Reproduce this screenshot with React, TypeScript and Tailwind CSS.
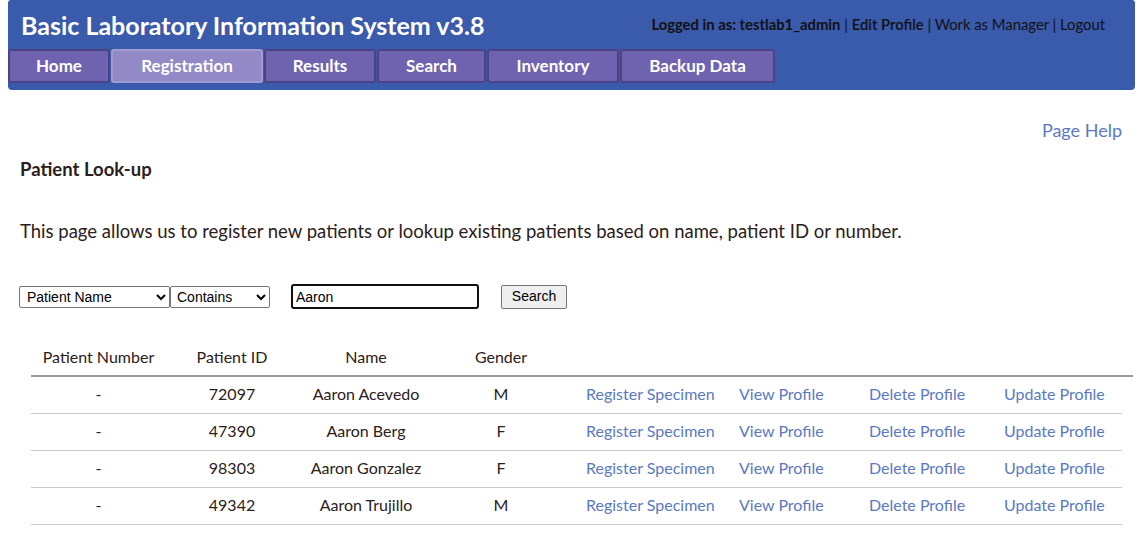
import React from "react";

const tabs = [
  { label: "Home", w: "w-[102px]" },
  { label: "Registration", w: "w-[152px]", active: true },
  { label: "Results", w: "w-[112px]" },
  { label: "Search", w: "w-[109px]" },
  { label: "Inventory", w: "w-[132px]" },
  { label: "Backup Data", w: "w-[155px]" },
];

const rows = [
  { id: "72097", name: "Aaron Acevedo", g: "M" },
  { id: "47390", name: "Aaron Berg", g: "F" },
  { id: "98303", name: "Aaron Gonzalez", g: "F" },
  { id: "49342", name: "Aaron Trujillo", g: "M" },
];

export default function App() {
  return (
    <div className="min-h-[535px] bg-white text-[#2b2020]" style={{ fontFamily: "Lato, 'Open Sans', sans-serif" }}>
      <div className="mx-[8px] h-[90px] rounded-b-[4px] rounded-t-[3px] bg-[#3a5aab] flex flex-col">
        <div className="flex items-start justify-between h-[48px]">
          <div className="pl-[13px] pt-[8px] text-[25px] font-bold text-white leading-[34px]">
            Basic Laboratory Information System v3.8
          </div>
          <div className="pr-[30px] pt-[15px] text-[14.8px] leading-[18px] text-[#111]">
            <span className="font-bold">Logged in as: testlab1_admin</span>
            <span> | </span>
            <span className="font-semibold">Edit Profile</span>
            <span> | </span>
            <span>Work as Manager</span>
            <span> | </span>
            <span>Logout</span>
          </div>
        </div>
        <div className="flex mt-[1px]">
          {tabs.map((t) => (
            <div
              key={t.label}
              className={`${t.w} h-[34px] mr-[1px] flex items-center justify-center rounded-[3px] border-2 text-[17px] font-bold text-white pb-[1px] ${
                t.active ? "bg-[#9389c6] border-[#a29cd2]" : "bg-[#6f63b0] border-[#4b4385]"
              }`}
            >
              {t.label}
            </div>
          ))}
        </div>
      </div>

      <div className="flex justify-end pr-[21px] pt-[28px] text-[18px] text-[#5b79c0] leading-[24px]">Page Help</div>

      <div className="pl-[20px] pt-[16px] text-[18.5px] font-bold leading-[22px]">Patient Look-up</div>

      <div className="pl-[20px] pt-[40px] text-[18.5px] leading-[22px]">
        This page allows us to register new patients or lookup existing patients based on name, patient ID or number.
      </div>

      <div className="flex items-center pl-[19px] pt-[42px]" style={{ fontFamily: "'Liberation Sans', Arial, sans-serif" }}>
        <select className="w-[151px] h-[22px] border border-[#767676] rounded-[2px] text-[14px] pl-[3px] bg-white text-black" defaultValue="Patient Name">
          <option>Patient Name</option>
        </select>
        <select className="ml-[0px] w-[100px] h-[22px] border border-[#767676] rounded-[2px] text-[14px] pl-[2px] bg-white text-black" defaultValue="Contains">
          <option>Contains</option>
        </select>
        <input
          className="ml-[21px] w-[188px] h-[25px] border-2 border-[#111] rounded-[3px] text-[14px] pl-[3px] text-black outline-none"
          defaultValue="Aaron"
        />
        <button className="ml-[22px] w-[66px] h-[24px] border border-[#767676] rounded-[2px] bg-[#efefef] text-[14px] text-black">
          Search
        </button>
      </div>

      <div className="pl-[31px] pt-[32px] text-[16px]">
        <div className="grid grid-cols-[135px_132px_136px_134px] h-[36px] items-center w-[1102px] border-b-2 border-[#999] text-center pb-[3px]">
          <div>Patient Number</div>
          <div>Patient ID</div>
          <div>Name</div>
          <div>Gender</div>
        </div>
        {rows.map((r) => (
          <div
            key={r.id}
            className="grid grid-cols-[135px_132px_136px_134px_153px_130px_135px_136px] h-[37px] items-center w-[1091px] border-b-[1.5px] border-[#cccccc] pb-[3px]"
          >
            <div className="text-center">-</div>
            <div className="text-center">{r.id}</div>
            <div className="text-center">{r.name}</div>
            <div className="text-center">{r.g}</div>
            <div className="pl-[18px] text-[#5b79c0]">Register Specimen</div>
            <div className="pl-[18px] text-[#5b79c0]">View Profile</div>
            <div className="pl-[18px] text-[#5b79c0]">Delete Profile</div>
            <div className="pl-[18px] text-[#5b79c0]">Update Profile</div>
          </div>
        ))}
      </div>
    </div>
  );
}
